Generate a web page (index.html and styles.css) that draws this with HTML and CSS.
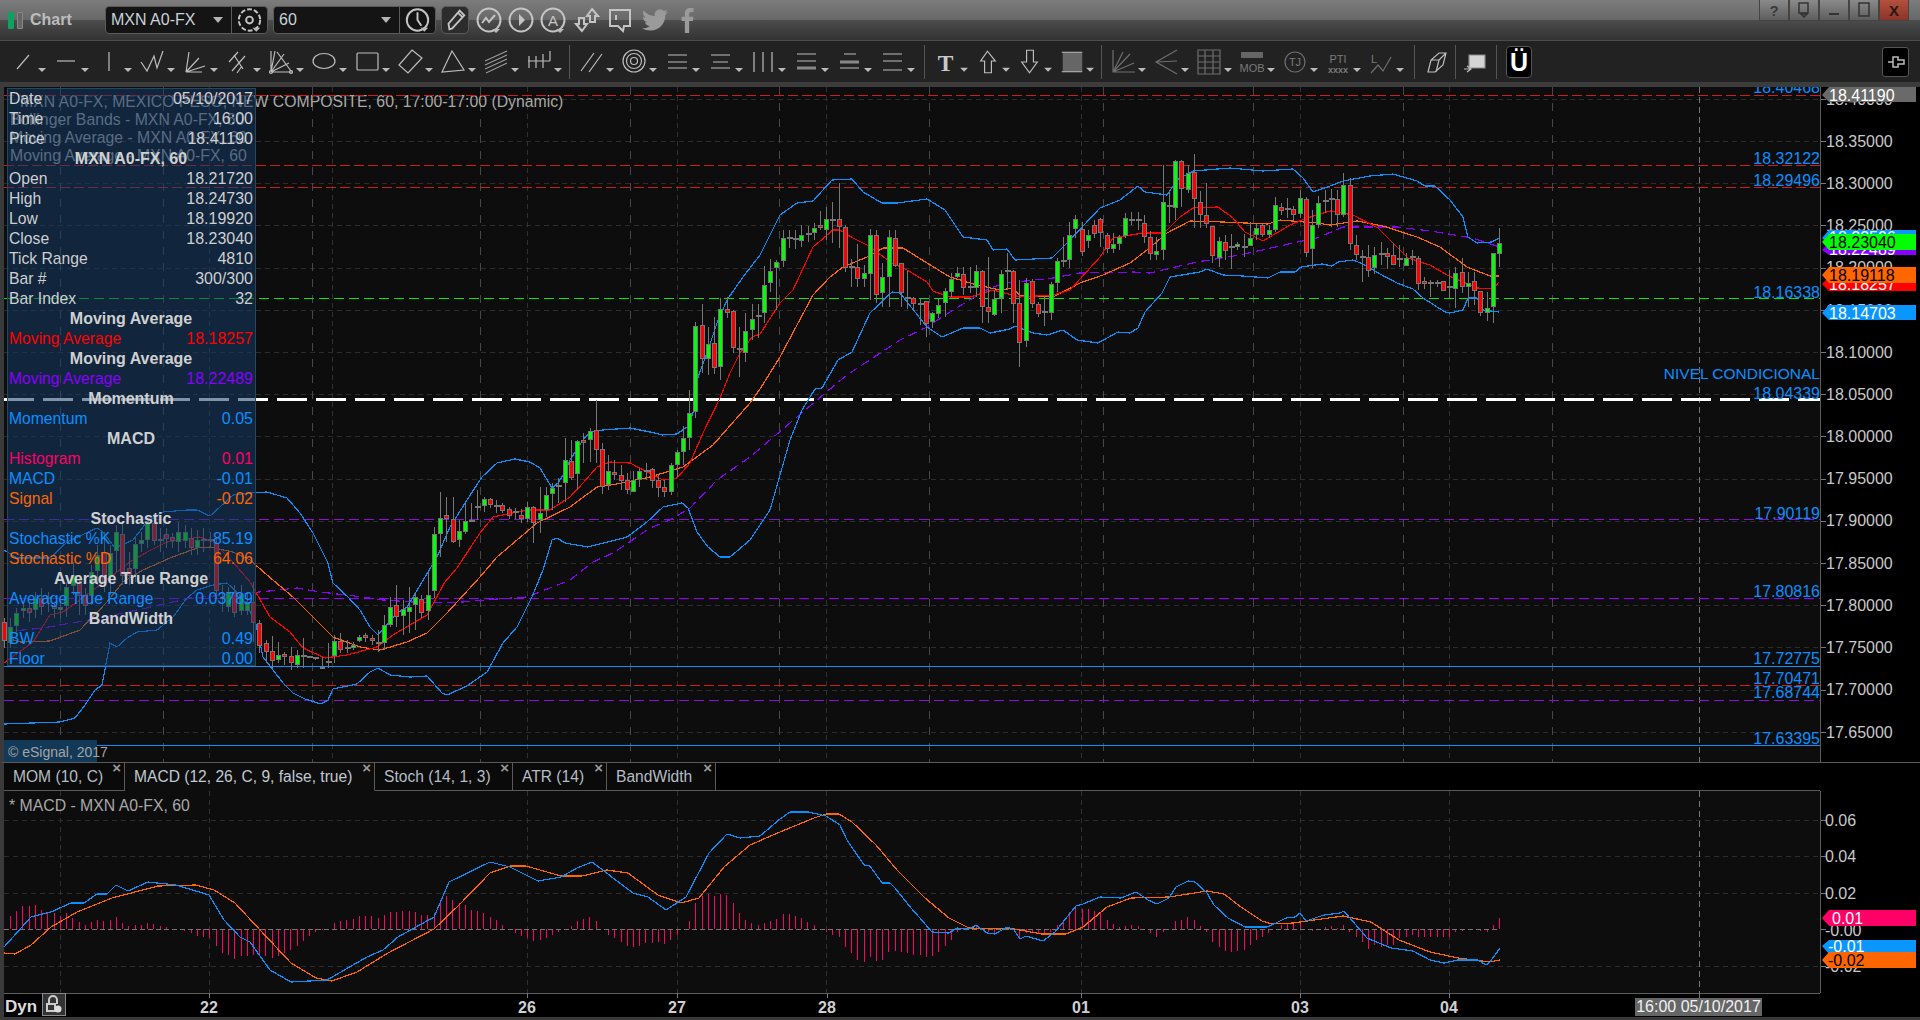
FILE: index.html
```html
<!DOCTYPE html>
<html lang="en">
<head>
<meta charset="utf-8">
<title>Chart</title>
<link rel="stylesheet" href="styles.css">
</head>
<body>
<svg class="defs" width="0" height="0"><defs><path id="caret" d="M36 26h8l-4 4z"/><path id="mini" d="M0 0h8l-4 4z"/></defs></svg>
<div class="app">
  <header class="titlebar">
    <div class="brand"><i class="bar-on"></i><i class="bar-off"></i></div>
    <span class="app-name">Chart</span>
    <div class="sel sel-first">
      <span class="sel-text">MXN A0-FX</span>
      <svg class="sel-caret" width="10" height="6"><path d="M0 0h10L5 6z"/></svg>
      <svg class="sel-ico" viewBox="0 0 36 28" width="36" height="28"><circle cx="18" cy="14" r="11" class="thick dotted"/><circle cx="18" cy="14" r="3.5" class="thick"/><use href="#mini" x="21" y="22" class="car"/></svg>
    </div>
    <div class="sel sel-second">
      <span class="sel-text">60</span>
      <svg class="sel-caret" width="10" height="6"><path d="M0 0h10L5 6z"/></svg>
      <svg class="sel-ico" viewBox="0 0 36 28" width="36" height="28"><circle cx="18" cy="14" r="11" class="thick"/><path d="M18 6v8l4 6" class="thick"/><use href="#mini" x="21" y="22" class="car"/></svg>
    </div>
    <div class="pencil-btn"><svg viewBox="0 0 28 28" width="26" height="26"><path d="M8 24l-1-6L19 4l5 5L11 23z M17 6l5 5" class="thick"/></svg></div>
    <svg class="tico" viewBox="0 0 32 32" width="32" height="32"><circle cx="16" cy="16" r="11.500" class="thick"/><path d="M9 19l4-5 3 4 6-7" class="thick"/><use href="#mini" x="19" y="25" class="car"/></svg>
    <svg class="tico" viewBox="0 0 32 32" width="32" height="32"><circle cx="16" cy="16" r="11.500" class="thick"/><path d="M14 10l6 6-6 6z" class="fillg"/></svg>
    <svg class="tico" viewBox="0 0 32 32" width="32" height="32"><circle cx="16" cy="16" r="11.500" class="thick"/><text x="16" y="22" class="tico-a">A</text><use href="#mini" x="19" y="25" class="car"/></svg>
    <svg class="tico tico-m2" viewBox="0 0 32 32" width="32" height="32"><path d="M21 5l6 7h-3v6h-5v-6h-3z M11 27l-6-7h3v-6h5v6h3z" class="thick"/></svg>
    <svg class="tico tico-m1" viewBox="0 0 32 32" width="32" height="32"><path d="M6 6h20v16h-6l-1 5-5-5H6z" class="thick"/><path d="M12 11v5" class="thick"/></svg>
    <svg class="tico-logo" viewBox="0 0 24 24" width="26" height="26"><path class="logo" d="M23.950 4.570a10 10 0 0 1-2.820.770 4.960 4.960 0 0 0 2.160-2.720 9.900 9.900 0 0 1-3.120 1.180 4.920 4.920 0 0 0-8.380 4.480A13.970 13.970 0 0 1 1.640 3.160a4.920 4.920 0 0 0 1.520 6.570 4.900 4.900 0 0 1-2.230-.61v.06a4.920 4.920 0 0 0 3.950 4.830 4.900 4.900 0 0 1-2.220.08 4.930 4.930 0 0 0 4.600 3.420A9.870 9.870 0 0 1 0 19.540a13.940 13.940 0 0 0 7.550 2.210c9.060 0 14-7.500 14-14v-.64a10 10 0 0 0 2.460-2.540z"/></svg>
    <svg class="tico-logo" viewBox="0 0 24 24" width="26" height="26"><path class="logo" d="M14 24V13h3.500l.5-4H14V6.500c0-1.200.3-2 2-2h2V1c-.4 0-1.600-.1-3-.1-3 0-5 1.800-5 5.200V9H7v4h3v11z"/></svg>
    <div class="winbtns">
      <span class="winbtn">?</span>
      <span class="winbtn"><svg width="14" height="16"><path d="M2 1h9v10H2z M4 12h6l-3 3z" class="wb"/></svg></span>
      <span class="winbtn"><svg width="14" height="16"><path d="M2 11h10v2H2z" class="wbf"/></svg></span>
      <span class="winbtn"><svg width="14" height="16"><path d="M2 1h10v13H2z" class="wb"/></svg></span>
      <span class="winbtn winclose">X</span>
    </div>
  </header>

  <nav class="toolbar">
    <svg class="ico" viewBox="0 0 43 40"><path d="M15 27L27 13"/><use href="#caret" class="car"/></svg>
    <svg class="ico" viewBox="0 0 43 40"><path d="M12 19h18"/><use href="#caret" class="car"/></svg>
    <svg class="ico" viewBox="0 0 43 40"><path d="M21 10v19"/><use href="#caret" class="car"/></svg>
    <svg class="ico" viewBox="0 0 43 40"><path d="M10 20l6 9 7-15 3 12 6-17"/><use href="#caret" class="car"/></svg>
    <svg class="ico" viewBox="0 0 43 40"><path d="M12 30L15 10M12 30L25 16M12 30l19-6M12 30h16"/><use href="#caret" class="car"/></svg>
    <svg class="ico" viewBox="0 0 43 40"><path d="M12 20l9-10M15 29l13-15M20 31l5-7M17 13l9 14"/><use href="#caret" class="car"/></svg>
    <svg class="ico" viewBox="0 0 43 40"><path d="M11 9v21h21M11 30L15 9M11 30L24 12M11 30l18-9M17 10l14 19"/><circle cx="11" cy="30" r="1.500"/><circle cx="31" cy="30" r="1.500"/><use href="#caret" class="car"/></svg>
    <svg class="ico" viewBox="0 0 43 40"><ellipse cx="21" cy="19" rx="11" ry="7.500"/><use href="#caret" class="car"/></svg>
    <svg class="ico" viewBox="0 0 43 40"><rect x="11" y="11" width="21" height="17" rx="1"/><use href="#caret" class="car"/></svg>
    <svg class="ico" viewBox="0 0 43 40"><path d="M23 8l10 8-14 15-9-8z"/><use href="#caret" class="car"/></svg>
    <svg class="ico" viewBox="0 0 43 40"><path d="M20 9l12 19-22 2z"/><use href="#caret" class="car"/></svg>
    <svg class="ico" viewBox="0 0 43 40"><path d="M10 19L32 9M10 23L32 13M10 27L32 17M11 31L32 21" class="dim"/><use href="#caret" class="car"/></svg>
    <svg class="ico" viewBox="0 0 43 40"><path d="M10 19h22M11 14v12M18 14v12M25 12v14M32 9v10"/><use href="#caret" class="car"/></svg>
    <span class="sep"></span>
    <svg class="ico" viewBox="0 0 43 40"><path d="M11 29L24 11M19 30L32 12"/><use href="#caret" class="car"/></svg>
    <svg class="ico" viewBox="0 0 43 40"><circle cx="21" cy="19" r="11"/><circle cx="21" cy="19" r="7.500"/><circle cx="21" cy="19" r="3.500"/><use href="#caret" class="car"/></svg>
    <svg class="ico" viewBox="0 0 43 40"><path d="M12 13h19M12 20h19M12 26h19"/><use href="#caret" class="car"/></svg>
    <svg class="ico" viewBox="0 0 43 40"><path d="M12 13h19M14 20h15M12 26h19"/><use href="#caret" class="car"/></svg>
    <svg class="ico" viewBox="0 0 43 40"><path d="M12 10v20M21 10v20M30 10v20"/><use href="#caret" class="car"/></svg>
    <svg class="ico" viewBox="0 0 43 40"><path d="M12 12h19M12 19h19"/><path d="M12 26h19" class="heavy"/><use href="#caret" class="car"/></svg>
    <svg class="ico" viewBox="0 0 43 40"><path d="M16 12h12M12 26h19"/><path d="M12 20h19" class="heavy"/><use href="#caret" class="car"/></svg>
    <svg class="ico" viewBox="0 0 43 40"><path d="M12 12h19M12 19h19M12 28h19"/><use href="#caret" class="car"/></svg>
    <span class="sep sep-t"></span>
    <svg class="ico ico-t" viewBox="0 0 43 40"><text x="21" y="29" class="tool-t">T</text><use href="#caret" class="car"/></svg>
    <svg class="ico ico-t" viewBox="0 0 43 40"><path d="M21 9l8 10h-4v12h-7V19h-4z"/><use href="#caret" class="car"/></svg>
    <svg class="ico ico-t" viewBox="0 0 43 40"><path d="M18 8h7v12h4l-8 11-8-11h5z"/><use href="#caret" class="car"/></svg>
    <svg class="ico ico-t" viewBox="0 0 43 40"><path d="M12 10h20v20H12z" class="fillm"/><path d="M11 10h21M11 30h21"/><use href="#caret" class="car"/></svg>
    <span class="sep"></span>
    <svg class="ico ico-off" viewBox="0 0 43 40"><path d="M11 8v22h22M11 30L28 12M11 30L21 10M11 30l21-9"/><use href="#caret" class="car"/></svg>
    <svg class="ico ico-off" viewBox="0 0 43 40"><path d="M32 8L11 20l21 12M11 20l21-1"/><use href="#caret" class="car"/></svg>
    <svg class="ico ico-off" viewBox="0 0 43 40"><path d="M10 8h22v24H10zM17 8v24M25 8v24M10 14h22M10 20h22M10 26h22"/><use href="#caret" class="car"/></svg>
    <svg class="ico ico-off" viewBox="0 0 43 40"><path d="M10 10h22v6H10z" class="fillm"/><text x="21" y="30" class="tool-s">MOB</text><use href="#caret" class="car"/></svg>
    <svg class="ico ico-off" viewBox="0 0 43 40"><circle cx="21" cy="20" r="10"/><text x="21" y="24" class="tool-s">TJ</text><use href="#caret" class="car"/></svg>
    <svg class="ico ico-off" viewBox="0 0 43 40"><text x="21" y="21" class="tool-s">PTI</text><text x="21" y="31" class="tool-x">xxxx</text><use href="#caret" class="car"/></svg>
    <svg class="ico ico-off" viewBox="0 0 43 40"><text x="14" y="21" class="tool-s">L</text><path d="M11 31l7-8 5 6 8-14"/><use href="#caret" class="car"/></svg>
    <span class="sep sep-e"></span>
    <svg class="ico ico-n" viewBox="0 0 40 40"><path d="M13 30l3-12 8-7h7l-3 12-8 7zM16 18h8l-3 12M24 18l7-7"/></svg>
    <span class="sep sep-n"></span>
    <svg class="ico ico-n" viewBox="0 0 40 40"><path d="M13 13h16v13H16l-3 0z" class="fillw"/><path d="M8 27h6M11 24l4 3-4 3"/></svg>
    <span class="sep sep-n"></span>
    <div class="magnet">Ü</div>
    <div class="pin"><svg width="18" height="20" viewBox="0 0 18 20"><path d="M1 10h5M6 5h5v3h6v4h-6v3H6z" class="wb"/></svg></div>
  </nav>
  <div class="spacer"></div>

  <section class="main">
    <svg class="plot" viewBox="0 87 1920 675" width="1920" height="675">
      <rect x="0" y="87" width="4" height="675" class="frame"/>
      <rect x="4" y="87" width="1816" height="675" class="bg"/>
      <rect x="1820" y="87" width="100" height="675" class="axisbg"/>
      <g id="main-grid"></g>
      <g class="head-text">
        <text x="20" y="107">MXN A0-FX, MEXICO PESO, NEW COMPOSITE, 60, 17:00-17:00 (Dynamic)</text>
        <text x="10" y="125">Bollinger Bands - MXN A0-FX, 60</text>
        <text x="10" y="143">Moving Average - MXN A0-FX, 60</text>
        <text x="10" y="161">Moving Average - MXN A0-FX, 60</text>
      </g>
      <g id="main-chart"></g>
      <g class="level-text">
        <text x="1820" y="93">18.40468</text>
        <text x="1820" y="164">18.32122</text>
        <text x="1820" y="186">18.29496</text>
        <text x="1820" y="298">18.16338</text>
        <text x="1820" y="379" class="nivel">NIVEL CONDICIONAL</text>
        <text x="1820" y="399">18.04339</text>
        <text x="1820" y="519">17.90119</text>
        <text x="1820" y="597">17.80816</text>
        <text x="1820" y="664">17.72775</text>
        <text x="1820" y="684">17.70471</text>
        <text x="1820" y="698">17.68744</text>
        <text x="1820" y="744">17.63395</text>
      </g>
      <rect x="4" y="740" width="93" height="22" class="esig-bg"/>
      <text x="8" y="757" class="esig">© eSignal, 2017</text>
      <g class="tick-text">
        <text x="1826" y="105">18.40000</text>
        <text x="1826" y="147">18.35000</text>
        <text x="1826" y="189">18.30000</text>
        <text x="1826" y="231">18.25000</text>
        <text x="1826" y="273">18.20000</text>
        <text x="1826" y="316">18.15000</text>
        <text x="1826" y="358">18.10000</text>
        <text x="1826" y="400">18.05000</text>
        <text x="1826" y="442">18.00000</text>
        <text x="1826" y="484">17.95000</text>
        <text x="1826" y="526">17.90000</text>
        <text x="1826" y="569">17.85000</text>
        <text x="1826" y="611">17.80000</text>
        <text x="1826" y="653">17.75000</text>
        <text x="1826" y="695">17.70000</text>
        <text x="1826" y="738">17.65000</text>
      </g>
      <g class="tags">
        <path d="M1822 95l7-8h87v15h-87z" class="t-grey"/><text x="1829" y="101" class="t-w">18.41190</text>
        <path d="M1822 238l7-8h87v15h-87z" class="t-blue"/><text x="1829" y="243" class="t-w">18.23596</text>
        <path d="M1822 250l7-7h87v12h-87z" class="t-purple"/><text x="1829" y="255" class="t-w">18.22489</text>
        <path d="M1822 242l7-8h87v16h-87z" class="t-green"/><text x="1829" y="248" class="t-k">18.23040</text>
        <path d="M1822 284l7-7h87v14h-87z" class="t-red"/><text x="1829" y="290" class="t-w">18.18257</text>
        <path d="M1822 275l7-8h87v16h-87z" class="t-orange"/><text x="1829" y="281" class="t-k">18.19118</text>
        <path d="M1822 313l7-8h87v15h-87z" class="t-blue"/><text x="1829" y="319" class="t-w">18.14703</text>
      </g>
    </svg>

    <aside class="cursor-panel">
      <div class="row"><span>Date</span><span class="num">05/10/2017</span></div>
      <div class="row"><span>Time</span><span class="num">16:00</span></div>
      <div class="row"><span>Price</span><span class="num">18.41190</span></div>
      <div class="row head">MXN A0-FX, 60</div>
      <div class="row"><span>Open</span><span class="num">18.21720</span></div>
      <div class="row"><span>High</span><span class="num">18.24730</span></div>
      <div class="row"><span>Low</span><span class="num">18.19920</span></div>
      <div class="row"><span>Close</span><span class="num">18.23040</span></div>
      <div class="row"><span>Tick Range</span><span class="num">4810</span></div>
      <div class="row"><span>Bar #</span><span class="num">300/300</span></div>
      <div class="row"><span>Bar Index</span><span class="num">32</span></div>
      <div class="row head">Moving Average</div>
      <div class="row c-red"><span>Moving Average</span><span class="num">18.18257</span></div>
      <div class="row head">Moving Average</div>
      <div class="row c-purple"><span>Moving Average</span><span class="num">18.22489</span></div>
      <div class="row head">Momentum</div>
      <div class="row c-blue"><span>Momentum</span><span class="num">0.05</span></div>
      <div class="row head">MACD</div>
      <div class="row c-pink"><span>Histogram</span><span class="num">0.01</span></div>
      <div class="row c-blue"><span>MACD</span><span class="num">-0.01</span></div>
      <div class="row c-orange"><span>Signal</span><span class="num">-0.02</span></div>
      <div class="row head">Stochastic</div>
      <div class="row c-blue"><span>Stochastic %K</span><span class="num">85.19</span></div>
      <div class="row c-orange"><span>Stochastic %D</span><span class="num">64.06</span></div>
      <div class="row head">Average True Range</div>
      <div class="row c-blue"><span>Average True Range</span><span class="num">0.03789</span></div>
      <div class="row head">BandWidth</div>
      <div class="row c-blue"><span>BW</span><span class="num">0.49</span></div>
      <div class="row c-blue"><span>Floor</span><span class="num">0.00</span></div>
    </aside>
  </section>

  <div class="tabs">
    <div class="tab tab-1">MOM (10, C)<span class="x">×</span></div>
    <div class="tab tab-2 active">MACD (12, 26, C, 9, false, true)<span class="x">×</span></div>
    <div class="tab tab-3">Stoch (14, 1, 3)<span class="x">×</span></div>
    <div class="tab tab-4">ATR (14)<span class="x">×</span></div>
    <div class="tab tab-5">BandWidth<span class="x">×</span></div>
  </div>

  <section class="lower">
    <svg class="plot" viewBox="0 791 1920 229" width="1920" height="229">
      <rect x="0" y="791" width="4" height="229" class="frame"/>
      <rect x="4" y="791" width="1816" height="202" class="bg"/>
      <rect x="1820" y="791" width="100" height="226" class="axisbg"/>
      <rect x="4" y="993" width="1816" height="24" class="axisbg"/>
      <g id="macd-grid"></g>
      <text x="9" y="811" class="macd-title">* MACD - MXN A0-FX, 60</text>
      <g id="macd-chart"></g>
      <g class="tick-text">
        <text x="1825" y="826">0.06</text>
        <text x="1825" y="862">0.04</text>
        <text x="1825" y="899">0.02</text>
        <text x="1825" y="936">-0.00</text>
        <text x="1825" y="972">-0.02</text>
      </g>
      <g class="tags">
        <path d="M1822 918l7-8h87v16h-87z" class="t-pink"/><text x="1832" y="924" class="t-w">0.01</text>
        <path d="M1822 946l7-6h87v14h-87z" class="t-blue"/><text x="1828" y="952" class="t-w">-0.01</text>
        <path d="M1822 960l7-8h87v16h-87z" class="t-orange"/><text x="1828" y="966" class="t-k">-0.02</text>
      </g>
      <g class="time-text">
        <text x="209" y="1013">22</text>
        <text x="527" y="1013">26</text>
        <text x="677" y="1013">27</text>
        <text x="827" y="1013">28</text>
        <text x="1081" y="1013">01</text>
        <text x="1300" y="1013">03</text>
        <text x="1449" y="1013">04</text>
      </g>
      <text x="5" y="1012" class="dyn">Dyn</text>
      <rect x="42.500" y="993.500" width="23" height="22" class="lock-box"/>
      <path d="M49 1004v-4a4 4 0 0 1 8 0v4M47 1004h8v7h-8z" class="lock-line"/>
      <circle cx="58" cy="1009" r="3.500" class="lock-dot"/>
      <rect x="1635" y="998" width="127" height="18" class="time-tag"/>
      <text x="1698.500" y="1012" class="time-tag-text">16:00 05/10/2017</text>
      <rect x="0" y="1017" width="1920" height="3" class="frame"/>
    </svg>
  </section>
</div>
<script src="chart.js"></script>
</body>
</html>
```
FILE: styles.css
```css
* { box-sizing: border-box; }
html, body { margin: 0; padding: 0; background: #3a3a3a; }
body { width: 1920px; height: 1020px; overflow: hidden; font-family: "Liberation Sans", Arial, sans-serif; }
.defs { position: absolute; }
.app { display: flex; flex-direction: column; width: 1920px; height: 1020px; }

.titlebar { display: flex; align-items: center; flex: 0 0 41px; padding-left: 8px; position: relative;
  background: linear-gradient(#7c7c7c 0, #686868 50%, #4c4c4c 51%, #333 100%); border-bottom: 1px solid #4c4c4c; }
.brand { display: flex; gap: 3px; }
.bar-on, .bar-off { display: block; width: 6px; height: 17px; border-radius: 1px; }
.bar-on { background: #12a060; }
.bar-off { background: #666; border: 1px solid #888; }
.app-name { margin-left: 7px; width: 75px; color: #bcbcbc; font-size: 16px; font-weight: bold; }
.sel { display: flex; align-items: center; height: 28px; width: 163px; background: #141414; border: 1px solid #5a5a5a; border-radius: 4px; position: relative; }
.sel-first { margin-right: 5px; }
.sel-text { padding-left: 5px; color: #c9d2da; font-size: 16px; flex: 1; }
.sel-caret { margin-right: 8px; }
.sel-caret path { fill: #b4b4b4; }
.sel-ico { border-left: 1px solid #5a5a5a; flex: 0 0 36px; }
.pencil-btn { margin-left: 5px; width: 28px; height: 28px; border: 1px solid #5a5a5a; border-radius: 5px; background: #2c2c2c; margin-right: 4px; }
.tico { flex: 0 0 32px; }
.tico-m2 { margin-left: 2px; }
.tico-m1 { margin-left: 1px; }
.tico-logo { flex: 0 0 26px; margin-left: 6px; }
.thick { fill: none; stroke: #c4c4c4; stroke-width: 2; }
.dotted { stroke-dasharray: 5 2; }
.fillg { fill: #c4c4c4; }
.tico-a { fill: #c4c4c4; font-size: 15px; text-anchor: middle; }
.logo { fill: #9a9a9a; }
.car { fill: #bbb; stroke: none; }
.winbtns { display: flex; position: absolute; top: 0; right: 11px; }
.winbtn { display: flex; align-items: center; justify-content: center; width: 30px; height: 21px; font-size: 15px; font-weight: bold; color: #3a3a3a;
  background: linear-gradient(#8a8a8a, #5e5e5e); border: 1px solid #444; border-top: 0; }
.winclose { background: linear-gradient(#b45040, #8a3428); color: #2c1612; }
.wb { fill: none; stroke: #333; stroke-width: 1.500; }
.wbf { fill: #333; }

.toolbar { display: flex; align-items: center; flex: 0 0 41px; padding-left: 2px; padding-top: 1px; background: #222; }
.ico { flex: 0 0 43px; width: 43px; height: 40px; overflow: visible; }
.ico path, .ico circle, .ico ellipse, .ico rect { fill: none; stroke: #bdbdbd; stroke-width: 1.200; }
.ico .dim { stroke: #999; }
.ico .heavy { stroke: #888; stroke-width: 3; }
.ico .fillm { fill: #666; stroke: none; }
.ico .fillw { fill: #d4d4d4; stroke: #888; }
.ico-t { flex-basis: 42px; width: 42px; }
.ico-off path, .ico-off circle { stroke: #6e6e6e; }
.ico-n { flex-basis: 40px; width: 40px; }
.tool-t { fill: #c8c8c8; font-size: 24px; font-weight: bold; text-anchor: middle; font-family: "Liberation Serif", serif; }
.tool-s { fill: #7a7a7a; font-size: 11px; text-anchor: middle; }
.tool-x { fill: #7a7a7a; font-size: 9px; font-weight: bold; text-anchor: middle; }
.sep { flex: 0 0 9px; height: 34px; width: 9px; border-right: 1px solid #555; }
.sep-t { flex-basis: 11px; width: 11px; }
.sep-e { flex-basis: 12px; width: 12px; }
.sep-n { flex-basis: 1px; width: 1px; }
.magnet { flex: 0 0 26px; width: 26px; margin-left: 9px; height: 32px; background: #000; border: 1px solid #555; border-radius: 4px; color: #fff; font-size: 25px; line-height: 31px; font-weight: bold; text-align: center; }
.pin { margin-left: auto; margin-right: 11px; width: 27px; height: 30px; background: #000; border: 1px solid #555; border-radius: 3px; display: flex; align-items: center; justify-content: center; }
.pin .wb { stroke: #bbb; }

.spacer { flex: 0 0 5px; background: #3c3c3c; }
.main { position: relative; flex: 0 0 675px; }
.lower { flex: 0 0 229px; }
.plot { display: block; font-family: "Liberation Sans", Arial, sans-serif; }
.frame { fill: #3a3a3a; }
.bg { fill: #0d0d0d; }
.axisbg { fill: #000; }

.head-text text { fill: #a8a8a8; font-size: 15.800px; }
.level-text text { fill: #0a8fff; font-size: 16px; text-anchor: end; }
.level-text .nivel { font-size: 15.500px; }
.tick-text text { fill: #c8c8c8; font-size: 16px; }
.tags text { font-size: 16px; }
.t-w { fill: #fff; }
.t-k { fill: #000; }
.t-grey { fill: #6a6a6a; }
.t-blue { fill: #0a96ff; }
.t-purple { fill: #8a00ff; }
.t-green { fill: #00ff00; }
.t-red { fill: #ff0000; }
.t-orange { fill: #ff6600; }
.t-pink { fill: #ff0066; }
.esig-bg { fill: #123a58; }
.esig { fill: #a4a4a4; font-size: 14px; }
.macd-title { fill: #a8a8a8; font-size: 15.800px; }
.time-text text { fill: #d0d0d0; font-size: 16px; font-weight: bold; text-anchor: middle; }
.dyn { fill: #dcdcdc; font-size: 17px; font-weight: bold; }
.lock-box { fill: #333; stroke: #888; }
.lock-line { fill: none; stroke: #ccc; stroke-width: 2; }
.lock-dot { fill: #ddd; }
.time-tag { fill: #666; }
.time-tag-text { fill: #f0f0f0; font-size: 16px; text-anchor: middle; }

.cursor-panel { position: absolute; left: 7px; top: 1px; width: 249px; height: 578px; padding: 0 2px 0 1px; background: rgba(22, 58, 102, .55); border: 1px solid #24485e; color: #cfcfcf; font-size: 15.700px; }
.row { display: flex; justify-content: space-between; height: 20px; line-height: 19px; white-space: nowrap; }
.num { font-size: 16px; }
.head { justify-content: center; font-weight: bold; font-size: 16px; color: #d0d0d0; }
.c-red { color: #ff0000; }
.c-purple { color: #8a00ff; }
.c-blue { color: #0a8fff; }
.c-pink { color: #ff0066; }
.c-orange { color: #ff6600; }

.tabs { display: flex; flex: 0 0 29px; background: #000; border-top: 1px solid #5a5a5a; border-left: 4px solid #3a3a3a; position: relative; }
.tabs::after { content: ""; position: absolute; left: 0; bottom: 0; width: 1816px; border-bottom: 1px solid #5a5a5a; }
.tab { position: relative; z-index: 1; height: 28px; padding-left: 9px; color: #b4bcc4; font-size: 15.600px; line-height: 28px; background: #0a0a0a; border-right: 1px solid #5a5a5a; border-bottom: 1px solid #5a5a5a; white-space: nowrap; }
.tab-1 { width: 121px; }
.tab-2 { width: 250px; }
.tab-3 { width: 138px; }
.tab-4 { width: 94px; }
.tab-5 { width: 109px; }
.active { background: #0d0d0d; border-bottom-color: #0d0d0d; color: #c0c8d0; }
.x { position: absolute; top: -4px; right: 3px; color: #999; font-size: 15px; line-height: 18px; font-weight: bold; }

.grid-h { stroke: #2c2c2c; stroke-dasharray: 5 4; }
.grid-v { stroke: #303030; stroke-dasharray: 5 4; }
.grid-v2 { stroke: #484848; stroke-dasharray: 8 8; }
.grid-now { stroke: #777; stroke-dasharray: 6 4; }
.tick { stroke: #777; }
.axis-line { stroke: #5c5c5c; }
.lv-red { stroke: #d01c1c; stroke-dasharray: 10 4; }
.lv-green { stroke: #00e800; stroke-dasharray: 10 5; }
.lv-purple { stroke: #9900ff; stroke-dasharray: 10 5; }
.lv-purple-dim { stroke: #8a10e0; stroke-dasharray: 10 5; }
.lv-white { stroke: #fff; stroke-width: 3; stroke-dasharray: 30 9; }
.lv-blue { stroke: #0a8fff; }
.ln { fill: none; shape-rendering: crispEdges; stroke-width: 1.200; }
.ln-blue { stroke: #0a8fff; }
.ln-red { stroke: #ff0000; }
.ln-orange { stroke: #ff6600; }
.ln-purple { stroke: #8a00ff; stroke-dasharray: 9 5; }
.wick { stroke: #777; }
.doji { stroke: #777; stroke-width: 2; }
.body-g { fill: #00ff00; stroke: #777; }
.body-r { fill: #ff0000; stroke: #777; }
.hist { stroke: #ff0066; }
.zero { stroke: #777; stroke-dasharray: 5 3; }
#main-grid, #main-chart, #macd-grid, #macd-chart { shape-rendering: crispEdges; }
```
FILE: chart.js
```js
// Price chart drawn from data read off the chart. Coordinates are page pixels.
const NS = 'http://www.w3.org/2000/svg';
function el(parent, name, attrs) {
  const n = document.createElementNS(NS, name);
  for (const k in attrs) n.setAttribute(k, attrs[k]);
  parent.appendChild(n);
  return n;
}
function hline(g, y, x1, x2, cls) { el(g, 'line', { x1, x2, y1: y + .5, y2: y + .5, class: cls }); }
function vline(g, x, y1, y2, cls) { el(g, 'line', { x1: x + .5, x2: x + .5, y1, y2, class: cls }); }
function poly(g, pts, cls) {
  const p = [];
  for (let i = 0; i < pts.length; i += 2) p.push(pts[i] + ',' + pts[i + 1]);
  el(g, 'polyline', { points: p.join(' '), class: 'ln ' + cls });
}

// Bars, newest first. Each: colour, top, bottom, wick top, wick bottom. "d" = no body (y, wick top, wick bottom).
const barSegments = [
  [150, 'g278 307 235 352,g310 469 310 520,g473 484 425 512,r422 484 422 497,r392 418 365 465,g398 407 365 470,r367 409 325 430,g368 412 350 475,d412 360 445,r392 418 392 420,d398 390 410,d398 390 440,r394 400 382 418,r323 397 318 420,d321 300 345,g325 346 310 348,d326 285 352,r314 340 280 345,r308 316 295 358,d311 275 345,g316 352 290 372,r320 358 285 380,d320 300 395,r284 312 255 330,r106 280 85 300,g104 190 70 200,r148 192 120 230,d147 118 230,d152 120 190,g158 220 138 235,g225 295 180 355,r146 304 140 322,g143 187 120 205,r176 190 168 212,d177 145 205,r172 181 158 195,g166 238 140 245,g239 250 225 265,r224 250 222 262,g233 250 222 270,g263 283 215 285,d291 252 322,g283 290 275 300,d291 252 358,r275 298 255 330,g274 322 262 350,r229 316 228 338,r196 220 100 235,r155 190 122 233,r67 145 12 235,g68 115 45 130,r34 115 30 170,g34 172 30 210,d168 120 220,g157 298 45 330,g302 310 262 330,r262 310 242 330,r218 256 195 280,d210 185 240,d210 185 225'],
  [150, 'g205 257 190 265,g260 277 255 300,g283 295 250 310,r256 295 250 310,r208 248 205 290,r226 250 210 265,g254 269 240 295,r236 302 215 318,g208 236 195 265,g254 325 215 355,d332 260 350,g332 395 325 425,g403 487 395 510,d485 440 528,r461 487 455 500,r392 457 388 475,g398 568 385 592,r460 578 390 652,r362 458 360 518,d364 310 420,g371 439 360 488,g448 493 420 498,r472 484 322 518,r362 466 360 518,g364 412 345 440,d410 350 430,r371 410 350 435,g370 380 350 385,g386 421 370 440,g424 457 415 500,g464 487 448 505,g490 514 485 535,r454 520 453 560,d461 447 525,r443 457 440 480,d443 362 478,r340 427 338 470,r263 344 240 350,g262 379 240 470,g382 427 340 472,r254 430 240 460,g254 367 238 450,g370 385 345 412,r352 385 282 410,d351 328 410,r230 350 225 365,r206 226 100 293,d209 155 280,g206 235 170 270,r226 232 183 240,g233 246 220 270,d251 228 275,g254 268 225 290,d267 240 298,d263 240 295,g263 330 240 350,g335 349 330 480,g364 396 328 425,g406 487 348 520,d497 462 565,g508 538 462 570,g544 606 490 635,d596 530 680,r484 592 480 610,r478 487 440 505,g478 649 445 690,r580 652 500 672,g581 624 530 675,r524 624 462 670'],
  [200, 'g379 635 366 654'],
  [400, 'g40 112 -30 150,g115 155 78 195,g157 193 150 230,g196 275 190 285,r262 275 240 292,r241 262 225 290,r208 241 205 265,d212 188 240,g212 235 205 262,g239 271 212 275,r241 268 220 283,r224 238 195 270,r215 222 180 240,g212 250 165 270,r146 257 130 282,r89 145 0 190,g92 115 85 185,r119 124 100 190,g124 220 120 270,r182 229 120 240,g181 247 115 305,d257 235 310,g263 277 250 330,g286 329 260 350,g338 356 260 400,r320 364 318 430,g320 352 305 365,r344 352 328 370,d336 325 358,r326 343 320 358,r315 329 310 340,d317 300 340,r298 312 295 325,g298 316 290 335,d322 270 360,d362 310 365,g362 391 310 402,g394 418 360 440,r357 424 290 430,r346 355 290 425,g355 401 275 470,g401 570 380 595,g584 629 515 660,r596 634 585 655,g592 612 575 690,g620 631 560 700,g628 646 600 705,r614 646 555 680,g622 674 590 680,g674 726 645 750,d728 690 755,r714 720 705 735,r706 712 700 725,g710 720 705 725,g734 740 725 750,d743 720 760,r722 745 700 760,g722 763 705 790,d786 730 805,g800 804 770 805,d773 770 780,d771 770 775,d767 715 805,g764 790 750 805,r767 784 740 810,r761 767 755 795,g764 775 725 790,r752 778 708 805,r728 753 720 790,r668 733 660 760'],
  [385, 'r650 710 590 770,g650 675 620 690,g628 675 600 690,r622 682 600 695,g622 665 605 680,d640 600 680,r475 615 460 640,d464 440 490,d465 430 500,g464 485 435 510,r458 485 430 510,g440 465 420 490,g442 468 410 500,r457 467 445 490,r448 460 430 490,d466 430 500,r415 465 405 480,g415 463 400 490,g466 476 440 500,g478 550 460 590,r550 570 500 600,r448 572 410 600,g442 495 420 560,g505 575 480 630,r500 590 440 620,g510 555 480 600,g560 628 540 660,r630 660 610 690,r590 630 570 690,g570 600 530 630,g605 660 590 695,g665 670 650 700,r662 668 650 700,d640 620 680,r640 665 610 690,g640 672 620 700,r668 680 650 710,g668 673 650 700,g685 720 670 740,g725 770 700 790,r710 765 700 790']
];

const bands = {
  upper: [4,550,17,558,50,558,67,542,97,528,103,532,115,548,133,540,147,522,163,512,187,510,197,510,210,516,220,507,233,495,250,493,267,492,287,498,300,513,313,533,328,563,333,583,348,597,360,610,370,627,378,635,385,627,397,613,407,607,437,557,450,527,467,500,482,477,497,463,515,459,530,462,540,468,552,488,558,483,565,472,570,460,583,440,590,432,603,430,630,428,650,432,662,435,677,434,687,427,693,413,698,377,707,353,717,323,727,300,743,277,760,255,780,215,797,203,813,201,832,180,852,179,863,192,882,203,897,203,927,199,945,210,963,237,987,240,993,250,1007,249,1015,260,1052,258,1070,240,1100,208,1120,200,1138,186,1145,192,1167,195,1177,180,1193,171,1230,168,1263,171,1293,169,1303,178,1313,192,1330,186,1343,181,1370,176,1393,174,1417,181,1425,186,1435,186,1450,200,1463,217,1468,237,1477,243,1492,242,1499,238],
  lower: [4,724,60,722,75,718,85,705,95,690,102,685,110,643,117,647,127,638,137,632,157,630,173,617,187,598,197,590,213,585,227,583,240,595,255,620,263,657,273,670,283,683,293,693,305,699,321,704,328,700,333,689,357,684,370,672,378,668,390,675,410,677,427,676,442,693,447,695,467,686,487,672,503,643,517,627,532,597,543,570,552,540,557,538,565,543,588,547,627,537,647,522,663,507,682,503,688,508,697,532,708,547,720,557,730,557,750,540,770,510,790,440,802,410,815,389,822,388,838,360,852,352,870,313,892,292,900,293,927,327,942,337,963,328,980,328,990,333,1010,329,1015,326,1033,333,1047,335,1063,330,1077,340,1098,343,1118,332,1130,333,1138,328,1145,312,1162,293,1170,277,1200,272,1207,269,1223,275,1243,276,1268,278,1280,272,1295,272,1301,267,1322,264,1332,266,1338,262,1353,260,1363,264,1380,274,1397,283,1413,289,1423,298,1445,312,1450,313,1463,310,1468,298,1477,298,1483,310,1499,312],
  red: [4,663,33,642,50,615,63,612,77,602,100,585,130,562,147,552,167,542,200,537,213,542,233,562,250,582,270,617,290,632,303,648,325,658,347,655,377,647,393,635,427,615,445,582,457,568,480,533,493,517,527,510,550,510,570,497,583,483,597,467,610,462,630,463,663,480,677,478,690,463,703,433,720,398,730,373,740,353,752,337,760,334,780,303,793,290,813,247,833,230,840,230,853,238,867,245,892,263,907,270,927,282,933,291,950,297,970,297,993,290,1020,297,1053,295,1070,290,1100,257,1113,238,1143,233,1163,233,1167,230,1180,217,1193,208,1218,207,1233,218,1245,232,1263,241,1290,225,1307,218,1330,211,1353,215,1378,228,1397,247,1408,258,1430,265,1447,275,1477,288,1493,289,1499,282],
  orange: [4,637,20,642,50,641,80,630,107,602,123,582,143,570,170,558,197,548,210,547,233,552,250,560,267,575,293,597,313,617,333,637,360,647,380,650,407,642,427,633,447,613,480,577,497,557,537,523,570,507,597,487,617,484,650,477,683,467,713,445,750,403,760,389,780,357,813,295,830,277,843,267,867,257,883,248,903,248,927,263,950,277,977,285,1000,290,1013,288,1020,296,1053,297,1080,283,1103,275,1130,263,1147,250,1167,233,1190,221,1223,222,1268,224,1280,220,1317,223,1330,225,1357,221,1383,226,1417,237,1440,247,1467,267,1490,276,1499,276],
  purple: [4,632,43,628,100,618,160,605,190,598,250,593,297,588,320,592,363,597,383,600,427,603,463,602,497,599,527,597,550,588,570,580,593,562,613,553,650,528,670,520,690,508,717,480,750,457,790,423,830,389,847,375,900,340,927,327,953,310,990,288,1007,283,1053,278,1080,273,1133,272,1150,273,1197,262,1240,255,1293,243,1317,238,1343,227,1397,227,1430,231,1473,238,1499,247]
};

const macd = {
  blue: [4,947,31,917,51,912,71,903,84,903,97,894,107,894,116,885,128,891,148,882,176,885,209,895,224,920,240,937,250,942,270,970,291,982,327,980,367,957,383,950,398,937,434,917,449,882,490,862,510,867,538,881,561,877,577,868,592,862,633,893,648,897,666,910,686,897,709,853,727,834,740,838,760,836,780,819,790,812,808,812,826,816,840,825,847,840,864,865,870,866,882,883,890,883,895,888,911,908,919,917,932,932,949,933,957,928,969,929,976,925,987,933,995,934,1007,927,1014,930,1020,939,1026,936,1043,941,1055,932,1076,906,1083,904,1100,897,1121,898,1136,892,1148,900,1157,904,1169,898,1176,887,1188,881,1195,882,1207,893,1214,905,1228,918,1245,927,1267,927,1276,923,1286,918,1295,917,1300,913,1306,921,1324,915,1340,913,1344,911,1367,938,1391,948,1413,951,1430,960,1444,963,1458,960,1478,960,1486,965,1490,962,1500,948],
  orange: [4,953,15,954,31,945,51,927,77,912,112,898,158,886,196,885,214,890,235,903,260,930,291,963,316,978,332,981,357,972,388,953,434,929,459,905,490,873,510,866,526,866,561,876,582,876,607,870,628,873,658,895,681,903,699,898,724,867,750,845,780,832,814,818,826,814,839,814,852,822,876,845,897,870,925,898,949,918,969,928,1014,929,1042,934,1066,934,1083,927,1107,907,1131,898,1169,897,1207,891,1224,894,1241,907,1262,921,1272,924,1293,923,1300,922,1343,916,1371,922,1399,940,1430,952,1458,958,1490,962,1500,960],
  hist: [13,18,23,23,24,19,16,16,13,16,11,7,4,7,9,8,9,12,6,3,4,4,6,5,3,2,0,0,-2,-4,-7,-8,-9,-17,-24,-26,-30,-27,-27,-26,-27,-27,-29,-27,-24,-21,-17,-12,-7,-3,-1,0,6,8,9,10,13,13,13,11,14,17,17,18,18,17,14,14,16,29,33,29,26,24,19,18,16,12,9,4,0,-4,-7,-9,-12,-11,-9,-6,-3,-1,3,8,10,12,8,0,-6,-9,-13,-17,-18,-17,-14,-14,-13,-15,-11,-6,0,8,26,33,35,33,35,34,26,16,9,6,4,6,8,10,15,15,13,11,7,4,0,-3,-6,-8,-18,-24,-31,-33,-28,-32,-31,-23,-22,-23,-24,-26,-26,-28,-27,-23,-17,-11,-3,-1,0,3,0,-3,-4,0,0,0,-8,-4,-4,-5,-6,-3,4,9,17,22,20,20,18,16,9,5,2,3,4,3,0,-4,-8,-3,0,8,9,12,9,3,-3,-13,-18,-22,-23,-22,-21,-16,-11,-8,-4,0,4,5,5,7,0,-2,0,2,3,1,4,-3,-8,-13,-20,-16,-18,-16,-16,-9,-8,-6,-8,-8,-8,-8,-8,-8,-3,-2,0,0,-2,-3,4,11]
};

const PRICE_LINES = [98.8, 141, 183.2, 225.4, 267.6, 310, 352, 394, 436.4, 478.6, 520.8, 563, 605.2, 647.4, 689.6, 732];
const MINOR_V = [60, 163, 312, 480, 630, 779, 929, 1103, 1253, 1403, 1552];
const DAY_V = [209, 332, 527, 677, 826, 1081, 1300, 1449];
const MACD_V = [60, 209, 527, 677, 826, 1081, 1300, 1449];
const LEVELS = [
  [95, 'lv-red'], [165, 'lv-red'], [187, 'lv-red'], [298, 'lv-green'],
  [519, 'lv-purple-dim'], [598, 'lv-purple'], [685, 'lv-red'], [700, 'lv-purple-dim'],
  [666, 'lv-blue'], [745, 'lv-blue']
];

function drawMainGrid() {
  const g = document.getElementById('main-grid');
  PRICE_LINES.forEach(y => {
    hline(g, Math.round(y), 4, 1820, 'grid-h');
    hline(g, Math.round(y), 1820, 1826, 'tick');
  });
  MINOR_V.forEach(x => vline(g, x, 87, 762, 'grid-v2'));
  DAY_V.forEach(x => vline(g, x, 87, 762, 'grid-v'));
  vline(g, 1699, 87, 762, 'grid-now');
  vline(g, 1820, 87, 762, 'axis-line');
}

function drawCandles(g) {
  const bars = [];
  barSegments.forEach(([base, text]) => {
    text.split(',').forEach(s => {
      const c = s[0];
      const v = s.slice(1).split(' ').map(n => base + Number(n) / 3);
      bars.push(c === 'd' ? { c, t: v[0], b: v[0], wt: v[1], wb: v[2] } : { c, t: v[0], b: v[1], wt: v[2], wb: v[3] });
    });
  });
  const n = bars.length;
  const step = (1499.5 - 4.5) / (n - 1);
  bars.forEach((bar, i) => {
    const x = Math.round(1499.5 - step * i - .5) + .5;
    el(g, 'line', { x1: x, x2: x, y1: Math.round(bar.wt), y2: Math.round(bar.wb), class: 'wick' });
    if (bar.c === 'd') {
      el(g, 'line', { x1: x - 3, x2: x + 3, y1: Math.round(bar.t), y2: Math.round(bar.t), class: 'doji' });
    } else {
      el(g, 'rect', { x: x - 2, y: Math.round(bar.t) + .5, width: 4, height: Math.max(1, Math.round(bar.b - bar.t)), class: bar.c === 'g' ? 'body-g' : 'body-r' });
    }
  });
}

function drawMain() {
  const g = document.getElementById('main-chart');
  LEVELS.forEach(([y, cls]) => hline(g, y, 4, 1820, cls));
  hline(g, 399, 4, 1820, 'lv-white');
  poly(g, bands.purple, 'ln-purple');
  poly(g, bands.upper, 'ln-blue');
  poly(g, bands.lower, 'ln-blue');
  poly(g, bands.orange, 'ln-orange');
  poly(g, bands.red, 'ln-red');
  drawCandles(g);
}

function drawMacd() {
  const grid = document.getElementById('macd-grid');
  [820, 856, 893, 966].forEach(y => {
    hline(grid, y, 4, 1820, 'grid-h');
    hline(grid, y, 1820, 1826, 'tick');
  });
  hline(grid, 929, 1820, 1826, 'tick');
  MACD_V.forEach(x => vline(grid, x, 791, 993, 'grid-v'));
  vline(grid, 1699, 791, 993, 'grid-now');
  hline(grid, 993, 4, 1820, 'axis-line');
  vline(grid, 1820, 791, 993, 'axis-line');
  [60, 209, 527, 677, 827, 1081, 1300, 1449, 1699].forEach(x => vline(grid, x, 993, 998, 'tick'));

  const g = document.getElementById('macd-chart');
  const n = macd.hist.length;
  const step = (1499.5 - 10.5) / (n - 1);
  macd.hist.forEach((h, i) => {
    if (!h) return;
    const x = Math.round(10 + step * i) + .5;
    el(g, 'line', { x1: x, x2: x, y1: 929, y2: 929 - h, class: 'hist' });
  });
  hline(g, 929, 4, 1500, 'zero');
  poly(g, macd.orange, 'ln-orange');
  poly(g, macd.blue, 'ln-blue');
}

drawMainGrid();
drawMain();
drawMacd();
```
